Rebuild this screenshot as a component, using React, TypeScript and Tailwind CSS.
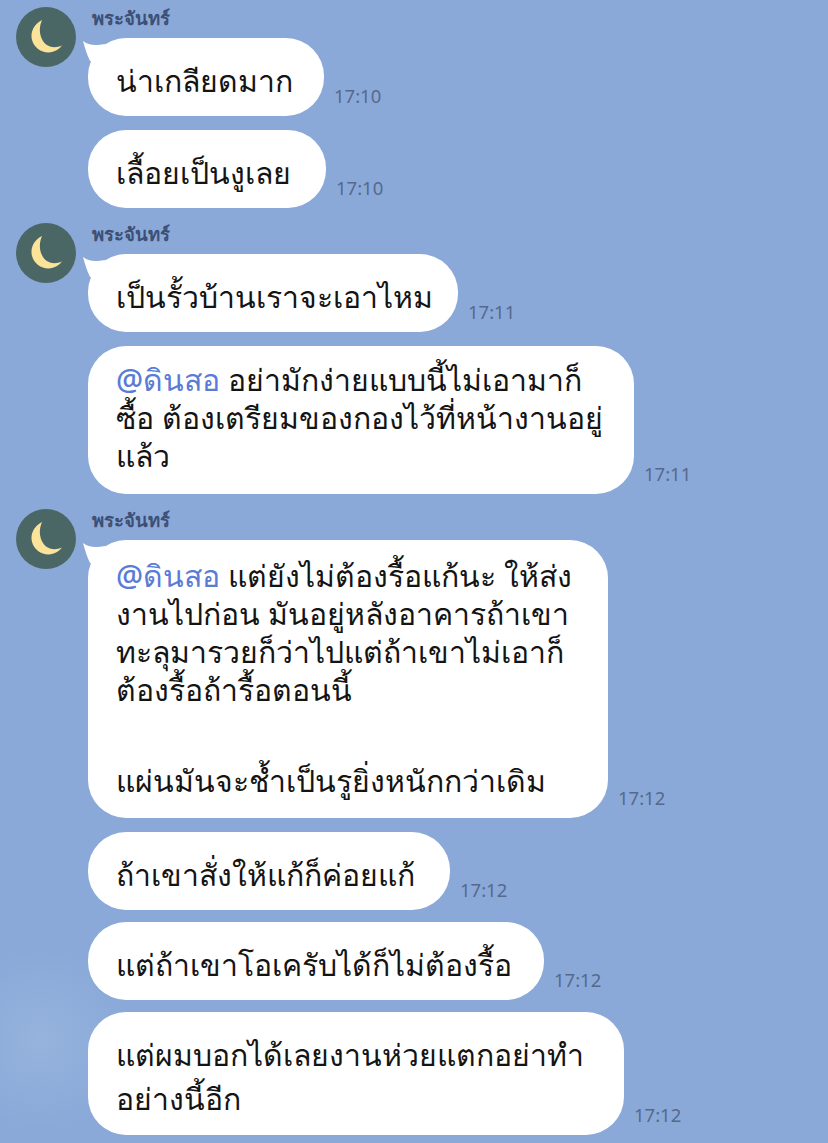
const FONT = "font-['Noto_Sans','DejaVu_Sans',sans-serif]";

interface Msg {
  time: string;
  width: string;
  pad: string;
  mt: string;
  lines: { mention?: string; text: string; gap?: string }[];
  tail?: boolean;
}

interface Group {
  top: string;
  msgs: Msg[];
}

const GROUPS: Group[] = [
  {
    top: 'mt-[7px]',
    msgs: [
      { time: '17:10', width: 'w-[236px]', pad: 'pt-[24px] pb-[16px]', mt: 'mt-0', tail: true, lines: [{ text: 'น่าเกลียดมาก' }] },
      { time: '17:10', width: 'w-[238px]', pad: 'pt-[24px] pb-[16px]', mt: 'mt-[14px]', lines: [{ text: 'เลื้อยเป็นงูเลย' }] },
    ],
  },
  {
    top: 'mt-[15px]',
    msgs: [
      { time: '17:11', width: 'w-[370px]', pad: 'pt-[24px] pb-[16px]', mt: 'mt-0', tail: true, lines: [{ text: 'เป็นรั้วบ้านเราจะเอาไหม' }] },
      {
        time: '17:11',
        width: 'w-[546px]',
        pad: 'pt-[15px] pb-[19px]',
        mt: 'mt-[14px]',
        lines: [
          { mention: '@ดินสอ', text: ' อย่ามักง่ายแบบนี้ไม่เอามาก็' },
          { text: 'ซื้อ ต้องเตรียมของกองไว้ที่หน้างานอยู่' },
          { text: 'แล้ว' },
        ],
      },
    ],
  },
  {
    top: 'mt-[15px]',
    msgs: [
      {
        time: '17:12',
        width: 'w-[520px]',
        pad: 'pt-[17px] pb-[18px]',
        mt: 'mt-0',
        tail: true,
        lines: [
          { mention: '@ดินสอ', text: ' แต่ยังไม่ต้องรื้อแก้นะ ให้ส่ง' },
          { text: 'งานไปก่อน มันอยู่หลังอาคารถ้าเขา' },
          { text: 'ทะลุมารวยก็ว่าไปแต่ถ้าเขาไม่เอาก็' },
          { text: 'ต้องรื้อถ้ารื้อตอนนี้' },
          { text: 'แผ่นมันจะช้ำเป็นรูยิ่งหนักกว่าเดิม', gap: 'mt-[53px]' },
        ],
      },
      { time: '17:12', width: 'w-[362px]', pad: 'pt-[24px] pb-[16px]', mt: 'mt-[14px]', lines: [{ text: 'ถ้าเขาสั่งให้แก้ก็ค่อยแก้' }] },
      { time: '17:12', width: 'w-[456px]', pad: 'pt-[24px] pb-[16px]', mt: 'mt-[12px]', lines: [{ text: 'แต่ถ้าเขาโอเครับได้ก็ไม่ต้องรื้อ' }] },
      {
        time: '17:12',
        width: 'w-[536px]',
        pad: 'pt-[24px] pb-[17px]',
        mt: 'mt-[12px]',
        lines: [
          { text: 'แต่ผมบอกได้เลยงานห่วยแตกอย่าทำ' },
          { text: 'อย่างนี้อีก', gap: 'mt-[6px]' },
        ],
      },
    ],
  },
];

function MoonAvatar() {
  return (
    <svg width="60" height="60" viewBox="0 0 60 60" className="block shrink-0">
      <circle cx="30" cy="30" r="30" fill="#4a6765" />
      <path
        d="M26 13 C18 17 14 25 16 33 C18.5 43 31 49 41 43 C43 41.6 44.5 40.5 46 38.5 C38 42 31 40 27 34 C23 27.5 23 20 26 13 Z"
        fill="#fbe39a"
      />
    </svg>
  );
}

function Bubble({ msg }: { msg: Msg }) {
  return (
    <div className={`flex items-end ${msg.mt}`}>
      <div className={`relative ${msg.width} ${msg.pad} rounded-[38px] bg-white pl-[28px] text-[30.2px] leading-[38px] text-[#141414]`}>
        {msg.tail && (
          <svg width="22" height="22" viewBox="0 0 22 22" className="absolute left-[-5px] top-[3px]">
            <path d="M0 0 C5 4 12 5 22 3 L22 20 L7 20 C4 14 2 7 0 0 Z" fill="#ffffff" />
          </svg>
        )}
        {msg.lines.map((l, i) => (
          <div key={i} className={`relative whitespace-nowrap ${l.gap ?? ''}`}>
            {l.mention && <span className="font-medium text-[#5a7bd6]">{l.mention}</span>}
            {l.text}
          </div>
        ))}
      </div>
      <span className="mb-[9px] ml-[10px] text-[18.5px] leading-[22px] text-[#56698c]">{msg.time}</span>
    </div>
  );
}

export default function App() {
  return (
    <div className={`flow-root h-[1143px] w-[828px] overflow-hidden bg-[#8aa9d8] bg-[radial-gradient(circle_at_40px_1040px,#96b3dd_0,#8aa9d8_90px)] ${FONT}`}>
      {GROUPS.map((g, i) => (
        <div key={i} className={`flex gap-[12px] pl-[16px] ${g.top}`}>
          <MoonAvatar />
          <div className="flex flex-col">
            <div className="h-[31px] pl-[4px] text-[18.5px] font-bold leading-[22px] text-[#3d4f74]">พระจันทร์</div>
            {g.msgs.map((m, j) => (
              <Bubble key={j} msg={m} />
            ))}
          </div>
        </div>
      ))}
    </div>
  );
}
